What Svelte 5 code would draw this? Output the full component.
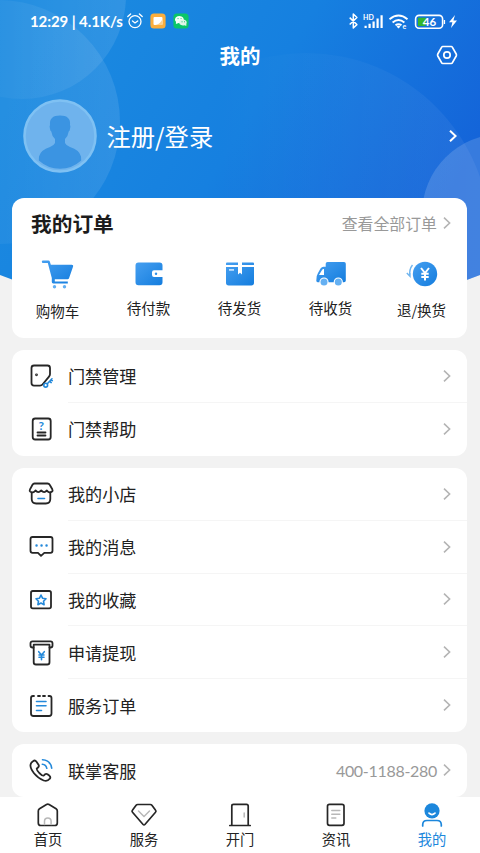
<script>
  const orders = [
    { icon: "cart", label: "购物车" },
    { icon: "wallet", label: "待付款" },
    { icon: "box", label: "待发货" },
    { icon: "truck", label: "待收货" },
    { icon: "refund", label: "退/换货" },
  ];

  const groups = [
    [
      { icon: "door", label: "门禁管理" },
      { icon: "help", label: "门禁帮助" },
    ],
    [
      { icon: "shop", label: "我的小店" },
      { icon: "message", label: "我的消息" },
      { icon: "favorite", label: "我的收藏" },
      { icon: "withdraw", label: "申请提现" },
      { icon: "service", label: "服务订单" },
    ],
    [{ icon: "phone", label: "联掌客服", value: "400-1188-280" }],
  ];

  const tabs = [
    { icon: "home", label: "首页" },
    { icon: "diamond", label: "服务" },
    { icon: "open", label: "开门" },
    { icon: "news", label: "资讯" },
    { icon: "me", label: "我的" },
  ];

  let active = $state("me");
</script>

{#snippet chevron()}
  <svg class="chevron" width="8" height="14" viewBox="0 0 8 14"><path d="M1 1.7 6.6 7 1 12.3" /></svg>
{/snippet}

<div class="page">
  <svg class="backdrop" width="480" height="330" viewBox="0 0 480 330">
    <defs>
      <linearGradient id="sky" gradientUnits="userSpaceOnUse" x1="60" y1="20" x2="420" y2="240">
        <stop offset="0" stop-color="#1b8ae0" />
        <stop offset="0.5" stop-color="#1680e0" />
        <stop offset="1" stop-color="#1464d9" />
      </linearGradient>
      <linearGradient id="glow" x1="0" y1="0" x2="1" y2="0">
        <stop offset="0.4" stop-color="#fff" stop-opacity="0.03" />
        <stop offset="1" stop-color="#fff" stop-opacity="0.1" />
      </linearGradient>
      <linearGradient id="haze" x1="0" y1="0" x2="1" y2="0">
        <stop offset="0.25" stop-color="#fff" stop-opacity="0" />
        <stop offset="1" stop-color="#fff" stop-opacity="0.06" />
      </linearGradient>
      <clipPath id="curve"><path d="M0 0H480V275Q240 371 0 275Z" /></clipPath>
    </defs>
    <g clip-path="url(#curve)">
      <rect width="480" height="330" fill="url(#sky)" />
      <circle cx="22" cy="-5" r="104" fill="url(#glow)" />
      <circle cx="-2" cy="122" r="122" fill="url(#glow)" />
      <circle cx="306" cy="237" r="184" fill="url(#haze)" />
      <circle cx="502" cy="214" r="80" fill="#fff" opacity="0.15" />
    </g>
  </svg>

  <div class="status">
    <span class="time">12:29 | 4.1K/s</span>
    <svg class="alarm" width="16" height="16" viewBox="0 0 16 16" fill="none" stroke="#fff" stroke-width="1.3">
      <circle cx="8" cy="8.6" r="6" />
      <path d="M.8 3.5 3.6 1M15.2 3.5 12.4 1M5.5 8l2.500 2L10.700 8" stroke-linecap="round" />
    </svg>
    <svg class="app" width="16" height="16" viewBox="0 0 16 16">
      <rect x=".4" y=".4" width="15.2" height="15.2" rx="3.5" fill="#fbae3c" />
      <rect x="3.5" y="4" width="9" height="8" rx="1" fill="#fff" />
      <path d="M12.5 6v5a1 1 0 0 1-1 1H5.5q5-1 7-6" fill="#fbd18f" />
    </svg>
    <svg class="app" width="16" height="16" viewBox="0 0 16 16">
      <rect x=".4" y=".4" width="15.2" height="15.2" rx="3.5" fill="#0bc668" />
      <path d="M2.9 11 3 8.8a4.4 3.5 0 1 1 2.7 1.2Z" fill="#f4fff8" />
      <path d="m13.3 13-1.8-.8a3.8 3 0 1 1 1.9-1.5Z" fill="#e0f5e8" />
      <path d="M5 5.6h.1M8 5.6h.1M9 8.800h.1M11.500 8.800h.1" stroke="#0bc668" stroke-width="1" stroke-linecap="round" />
    </svg>
    <svg class="signals" width="112" height="20" viewBox="0 0 112 20">
      <g fill="none" stroke="#fff" stroke-width="1.5" stroke-linejoin="round">
        <path d="m1.700 6.600 7.200 7L5.300 17V3l3.600 3.500-7.200 7" />
        <path d="M41.500 8.200q9-7.200 18 0M44.600 11.400q5.900-4.800 11.800 0M47.500 14.300q3-2.300 6 0" stroke-width="1.900" />
        <rect x="67.600" y="4.400" width="27" height="12.800" rx="3.500" stroke-width="1.600" />
      </g>
      <g fill="#fff">
        <path d="M16.500 14.800h2.200v2.200h-2.200zM20.500 12.800h2.200V17h-2.200zM24.500 10.400h2.200V17h-2.200zM28.500 7.500h2.200V17h-2.200zM32.500 4.300h2.200V17h-2.200z" />
        <path d="m48.500 15.400 2 2.200 2-2.200q-2-1.300-4 0M95.800 9h1.300v4h-1.300zM107 4l-6 7.300h3.400L103 17l6-7.400h-3.600Z" />
      </g>
      <path d="M70 6.800h8l-.5 8.200H70z" fill="#34b52c" />
      <text x="15" y="8.500" font-size="7">HD</text>
      <text x="54.500" y="18" font-size="7">e</text>
      <text x="74.800" y="15" font-size="11.500">46</text>
    </svg>
  </div>

  <header>
    <h1>我的</h1>
    <svg class="settings" width="22" height="20" viewBox="0 0 22 20" fill="none" stroke="#fff" stroke-width="1.7" stroke-linejoin="round">
      <path d="M6.7 1.5h8.6q.7 0 1 .6L20.2 9q.5 1 0 2l-3.9 6.9q-.3.6-1 .6H6.7q-.7 0-1-.6L1.8 11q-.5-1 0-2l3.900-6.900q.3-.6 1-.6Z" />
      <circle cx="11" cy="10" r="3.2" />
    </svg>
  </header>

  <section class="user">
    <svg width="74" height="74" viewBox="0 0 74 74">
      <circle cx="37" cy="37" r="35.5" fill="#6fb3ed" stroke="#7fc1f3" stroke-width="2.6" />
      <path d="M27 26q-1-9.5 10-9.5T47 26q.8 1 0 4-.3 2-1.300 2.500-.7 5-3.700 7.500v4q1 2.500 5 4 9.500 3 11 9.500l.2 4Q49 69.800 37 69.800T15.800 61.500l.2-4Q17.500 51 27 48q4-1.500 5-4v-4q-3-2.500-3.700-7.500-1-.5-1.300-2.500-.8-3 0-4Z" fill="#3b94e2" />
    </svg>
    <span>注册/登录</span>
    {@render chevron()}
  </section>

  <main>
    <section class="card orders">
      <div class="orders-head">
        <h2>我的订单</h2>
        <span>查看全部订单</span>
        {@render chevron()}
      </div>
      <div class="order-grid">
        {#each orders as item}
          <div class="order {item.icon}">
            <svg width="34" height="30" viewBox="0 0 34 30">
              <defs>
                <linearGradient id="blue-{item.icon}" x1="0" y1="0" x2="1" y2="1">
                  <stop offset="0" stop-color="#469ff0" />
                  <stop offset="1" stop-color="#147dde" />
                </linearGradient>
              </defs>
              <g fill="url(#blue-{item.icon})">
                {#if item.icon === "cart"}
                  <path d="M2 1.500h5.500q1 0 1.400 1.200l.9 3h21q1.900 0 1.300 1.800l-4 11.500q-.4 1.200-1.600 1.200H13.800v2.300h13v2H12.200q-1.400 0-1.400-1.400v-4L6.800 4H2q-1.200 0-1.200-1.200T2 1.500Z" />
                  <circle cx="13.500" cy="27.800" r="1.700" fill="#62aff2" />
                  <circle cx="23.500" cy="27.800" r="1.700" fill="#62aff2" />
                {:else if item.icon === "wallet"}
                  <path d="M6.500 3.500h21q3 0 3 3v4.800h-8.500q-2 0-2 2V16q0 2 2 2h8.500v5.300q0 3-3 3h-21q-3 0-3-3V6.500q0-3 3-3Z" />
                  <circle cx="24" cy="14.800" r="1.200" />
                {:else if item.icon === "box"}
                  <path d="M4 3.500h11v2.600H3V4.500q0-1 1-1ZM19 3.500h11q1 0 1 1v1.600H19ZM3 8h12v7.500l2-1.700 2 1.700V8h12v15.800q0 2.700-2.700 2.700H5.700Q3 26.500 3 23.800Z" />
                  <path d="M6 10.900h5" stroke="#d8ecff" stroke-width="1.500" />
                {:else if item.icon === "truck"}
                  <path fill-rule="evenodd" d="M13.500 3h16.500q1.800 0 1.800 1.800v16.700q0 1.700-1.800 1.700h-26Q2.500 23.200 2.300 21.700q-.2-5 1.700-7.700l2.500-4.500Q7.700 7.700 9.500 7.700h2.200V4.800Q11.700 3 13.500 3ZM9.500 10q-.8 0-1.300.8L5 16h5V10Z" />
                  <circle cx="10" cy="23" r="4.600" fill="#fff" />
                  <circle cx="24.300" cy="23" r="4.600" fill="#fff" />
                  <circle cx="10" cy="23" r="3.500" fill="#65b0f2" />
                  <circle cx="24.300" cy="23" r="3.500" fill="#65b0f2" />
                {:else}
                  <circle cx="20" cy="15" r="12.200" />
                  <path d="m16 9 4 5 4-5M20 14v7.500M16.300 14.800h7.400M16.300 18h7.400" fill="none" stroke="#fff" stroke-width="2" />
                  <path d="M7.500 6Q3.800 10.500 5 17.300M1.800 14l3.200 3.300V14" fill="none" stroke="#70b5ee" stroke-width="1.400" />
                {/if}
              </g>
            </svg>
            <span>{item.label}</span>
          </div>
        {/each}
      </div>
    </section>

    {#each groups as rows}
      <section class="card">
        {#each rows as row}
          <div class="row">
            <svg class="row-icon" width="28" height="28" viewBox="0 0 28 28">
              {#if row.icon === "door"}
                <path d="M7 3.500h13.500q2.500 0 2.500 2.500v6q0 1.500-1 2.700l-6.500 7.800Q14.600 23.600 13 23.600H7q-2.500 0-2.500-2.500V6Q4.500 3.500 7 3.500Z" />
                <circle cx="9.500" cy="12.800" r=".5" />
                <path class="accent" d="m20.300 21.700 4.700-4.900M22.700 19.300l1.500 1.300M24 17.600l1.300 1" />
                <circle class="accent" cx="18.700" cy="23.200" r="1.900" />
              {:else if row.icon === "help"}
                <rect x="5.700" y="3.500" width="18" height="21" rx="2.500" />
                <path d="M10.500 17.500h8M10.500 20.500h8" />
                <text x="11.500" y="14.800">?</text>
              {:else if row.icon === "shop"}
                <path d="M7.500 3.500h13q1.500 0 2.200 1.300l2.600 4.500q.8 1.500-.2 2.300-3 2.200-5.200-1.200-2.700 3.500-5.700 0-3 3.500-5.700 0-2.400 3.400-5.300 1.200-1-.8-.2-2.300l2.500-4.500q.6-1.300 2-1.300Z" />
                <path d="M4.700 12.500v6.500q0 4.500 4.500 4.500h9.600q4.500 0 4.500-4.500v-6.500" />
                <path class="accent" d="M11 18.500h6.500" />
              {:else if row.icon === "message"}
                <path d="M5.500 4h18q2 0 2 2v11.800q0 2-2 2h-6.200l-3.300 3-3-3H5.500q-2 0-2-2V6q0-2 2-2Z" />
                <path class="accent dots" d="M9.500 12.500h.1M14.500 12.500h.1M19.500 12.500h.1" />
              {:else if row.icon === "favorite"}
                <rect x="4" y="5" width="20" height="17.300" rx="1.800" />
                <path class="accent" d="m14 9 1.500 3.200 3.500.5-2.500 2.500.6 3.500L14 17l-3.100 1.700.6-3.500L9 12.700l3.500-.5Z" />
              {:else if row.icon === "withdraw"}
                <path d="M6.500 8.500h-1q-2 0-2-2V4.300q0-2 2-2h18q2 0 2 2v2.200q0 2-2 2h-1" />
                <path d="M6.700 5.700h15.800v17.500q0 2.300-2.300 2.300H9q-2.300 0-2.300-2.300Z" />
                <path class="accent" d="m11.700 12.700 2.800 3.300 2.800-3.300M14.500 16v4.700M12 16h5M12 18.300h5" />
              {:else if row.icon === "service"}
                <path d="M7 4H6Q4 4 4 6v15.500q0 2.500 2.500 2.500H22q2.500 0 2.500-2.500V6q0-2-2-2h-1M11 4h2M16 4h2" />
                <path class="accent" d="M9.500 9.500h9.500M9.500 13.800h9.500M9.500 18.500h5" />
              {:else}
                <path d="M6 4.200q2-1.500 3.500.5l2 3q1 1.700-.7 3l-1 .8q-.6 1 2.500 4.500 3.400 3.300 4.400 2.600l1.300-1.300q1.200-.8 2.500 0l2 1.500q1.500 1.500.2 3-2.200 3-6 1.700-5.500-2-9.700-7.200-4-5-3.500-8.500.4-2.200 2.500-3.600Z" />
                <path class="accent" d="M15.500 2.700q8 .5 9.200 8.500M15.300 7.300q3.700.3 4.500 4" />
              {/if}
            </svg>
            <div class="row-body">
              <span class="label">{row.label}</span>
              {#if row.value}<span class="value">{row.value}</span>{/if}
              {@render chevron()}
            </div>
          </div>
        {/each}
      </section>
    {/each}
  </main>

  <nav>
    {#each tabs as tab}
      <button class:active={active === tab.icon} onclick={() => (active = tab.icon)}>
        <svg width="28" height="26" viewBox="0 0 28 26">
          {#if tab.icon === "home"}
            <path d="m12.500 2.500-7 4.300Q4.300 7.600 4.300 9v12q0 2.500 2.500 2.500h14q2.500 0 2.500-2.500V9q0-1.400-1.200-2.200l-7-4.300q-1.300-.8-2.600 0Z" />
            <path class="faint" d="M10.500 22.500v-3.200q0-3.300 3.300-3.300t3.300 3.300v3.200" />
          {:else if tab.icon === "diamond"}
            <path d="M7.700 2.500h12.600q1 0 1.600.8l3.700 5q.8 1-.1 2L14.900 22.500q-.9 1-1.800 0L2.500 10.300q-.9-1-.1-2l3.700-5q.6-.8 1.600-.8Z" />
            <path class="faint" d="m8.500 9 5.500 5.500L19.500 9" />
          {:else if tab.icon === "open"}
            <path d="M3.800 23.500h20.400M5.800 23V4q0-1.700 1.700-1.700h13q1.700 0 1.700 1.700v19" />
            <path class="faint" d="M18.200 11v4" />
          {:else if tab.icon === "news"}
            <rect x="5.500" y="2.300" width="16.500" height="21" rx="2" />
            <path class="faint" d="M9.800 8.500h8M9.800 12.300h8M9.800 16h4" />
          {:else}
            <circle class="solid" cx="14" cy="8.800" r="7.600" />
            <path class="smile" d="M11 11.200q3 2.800 6 0" />
            <path d="M4.700 24v-1.200q0-4.300 4.300-4.300h10q4.300 0 4.300 4.300V24" />
          {/if}
        </svg>
        <span>{tab.label}</span>
      </button>
    {/each}
  </nav>
</div>

<style>
  .page {
    position: relative;
    display: flex;
    flex-direction: column;
    width: 480px;
    height: 853px;
    overflow: hidden;
    background: #f2f2f2;
    color: #222;
    font-family: "Noto Sans CJK SC", sans-serif;
  }
  .backdrop {
    position: absolute;
    top: 0;
    left: 0;
  }
  .status, header, .user, main, nav {
    position: relative;
    flex-shrink: 0;
  }
  svg {
    display: block;
    flex-shrink: 0;
  }
  h1, h2 {
    margin: 0;
    font-weight: 700;
  }

  .status {
    display: flex;
    align-items: center;
    height: 40px;
    padding: 2px 20px 0 30px;
    box-sizing: border-box;
    color: #fff;
  }
  .time {
    width: 96.5px;
    font: 700 15px/20px Lato, sans-serif;
    letter-spacing: -0.1px;
    white-space: nowrap;
  }
  .alarm {
    margin-right: 7px;
  }
  .app {
    margin-right: 7px;
  }
  .signals {
    margin-left: auto;
  }
  .signals text {
    fill: #fff;
    font-family: Lato, sans-serif;
    font-weight: 700;
  }

  header {
    display: flex;
    align-items: center;
    justify-content: center;
    height: 30px;
  }
  h1 {
    color: #fff;
    font-size: 20.5px;
    line-height: 30px;
  }
  .settings {
    position: absolute;
    right: 22px;
    top: 5px;
  }

  .user {
    display: flex;
    align-items: center;
    height: 128px;
    padding: 4px 23px 0 23px;
    box-sizing: border-box;
    color: #fff;
  }
  .user span {
    flex: 1;
    margin-left: 9.5px;
    font-size: 24.3px;
    line-height: 34px;
  }
  .chevron path {
    fill: none;
    stroke: #b4b4b4;
    stroke-width: 1.6;
  }
  .user .chevron path {
    stroke: #fff;
    stroke-width: 2;
  }

  main {
    display: flex;
    flex: 1;
    flex-direction: column;
    gap: 12.4px;
    min-height: 0;
    padding: 0 13px 0 12px;
    overflow: hidden;
  }
  .card {
    flex-shrink: 0;
    border-radius: 12px;
    background: #fff;
  }
  .orders {
    height: 139.6px;
  }
  .orders-head {
    display: flex;
    align-items: center;
    height: 50px;
    padding: 0 16px 0 19px;
  }
  h2 {
    flex: 1;
    color: #1c1c1c;
    font-size: 20.7px;
    line-height: 30px;
  }
  .orders-head span {
    margin-right: 6px;
    color: #999;
    font-size: 15.9px;
  }
  .order-grid {
    display: grid;
    grid-template-columns: repeat(5, 1fr);
    padding-top: 11px;
  }
  .order {
    display: flex;
    flex-direction: column;
    align-items: center;
    font-size: 14.5px;
    line-height: 20px;
  }
  .order span {
    margin-top: 9px;
  }
  .order.cart span {
    margin-top: 12px;
  }
  .order.refund span {
    margin-top: 10.5px;
  }

  .row {
    display: flex;
    align-items: center;
    height: 52.8px;
    padding-left: 15px;
  }
  .row-icon {
    fill: none;
    stroke: #262626;
    stroke-width: 1.8;
    stroke-linecap: round;
    stroke-linejoin: round;
  }
  .row-icon .accent {
    stroke: #2489da;
    stroke-width: 1.6;
  }
  .row-icon .dots {
    stroke-width: 2.4;
  }
  .row-icon text {
    fill: #2489da;
    stroke: none;
    font: 700 12px Lato, sans-serif;
  }
  .row-body {
    display: flex;
    flex: 1;
    align-items: center;
    height: 100%;
    margin-left: 13px;
    padding-right: 16px;
    box-sizing: border-box;
    border-bottom: 1px solid #f5f5f5;
  }
  .row:last-child .row-body {
    border-bottom-color: transparent;
  }
  .label {
    flex: 1;
    font-size: 17.1px;
  }
  .value {
    margin-right: 6px;
    color: #999;
    font: 16px Lato, sans-serif;
    letter-spacing: -0.3px;
  }

  nav {
    display: flex;
    height: 56px;
    background: #fff;
  }
  button {
    display: flex;
    flex: 1;
    flex-direction: column;
    align-items: center;
    padding: 5px 0 0;
    border: 0;
    background: none;
    color: #222;
    font: 14.3px/20px "Noto Sans CJK SC", sans-serif;
  }
  button span {
    margin-top: 1px;
  }
  button svg {
    fill: none;
    stroke: #262626;
    stroke-width: 1.7;
    stroke-linecap: round;
    stroke-linejoin: round;
  }
  button .faint {
    stroke: #b8b8b8;
    stroke-width: 1.5;
  }
  .active {
    color: #1c87dc;
  }
  .active svg {
    stroke: #1c87dc;
  }
  button .solid {
    fill: #1c87dc;
    stroke: none;
  }
  button .smile {
    stroke: #fff;
  }
</style>
